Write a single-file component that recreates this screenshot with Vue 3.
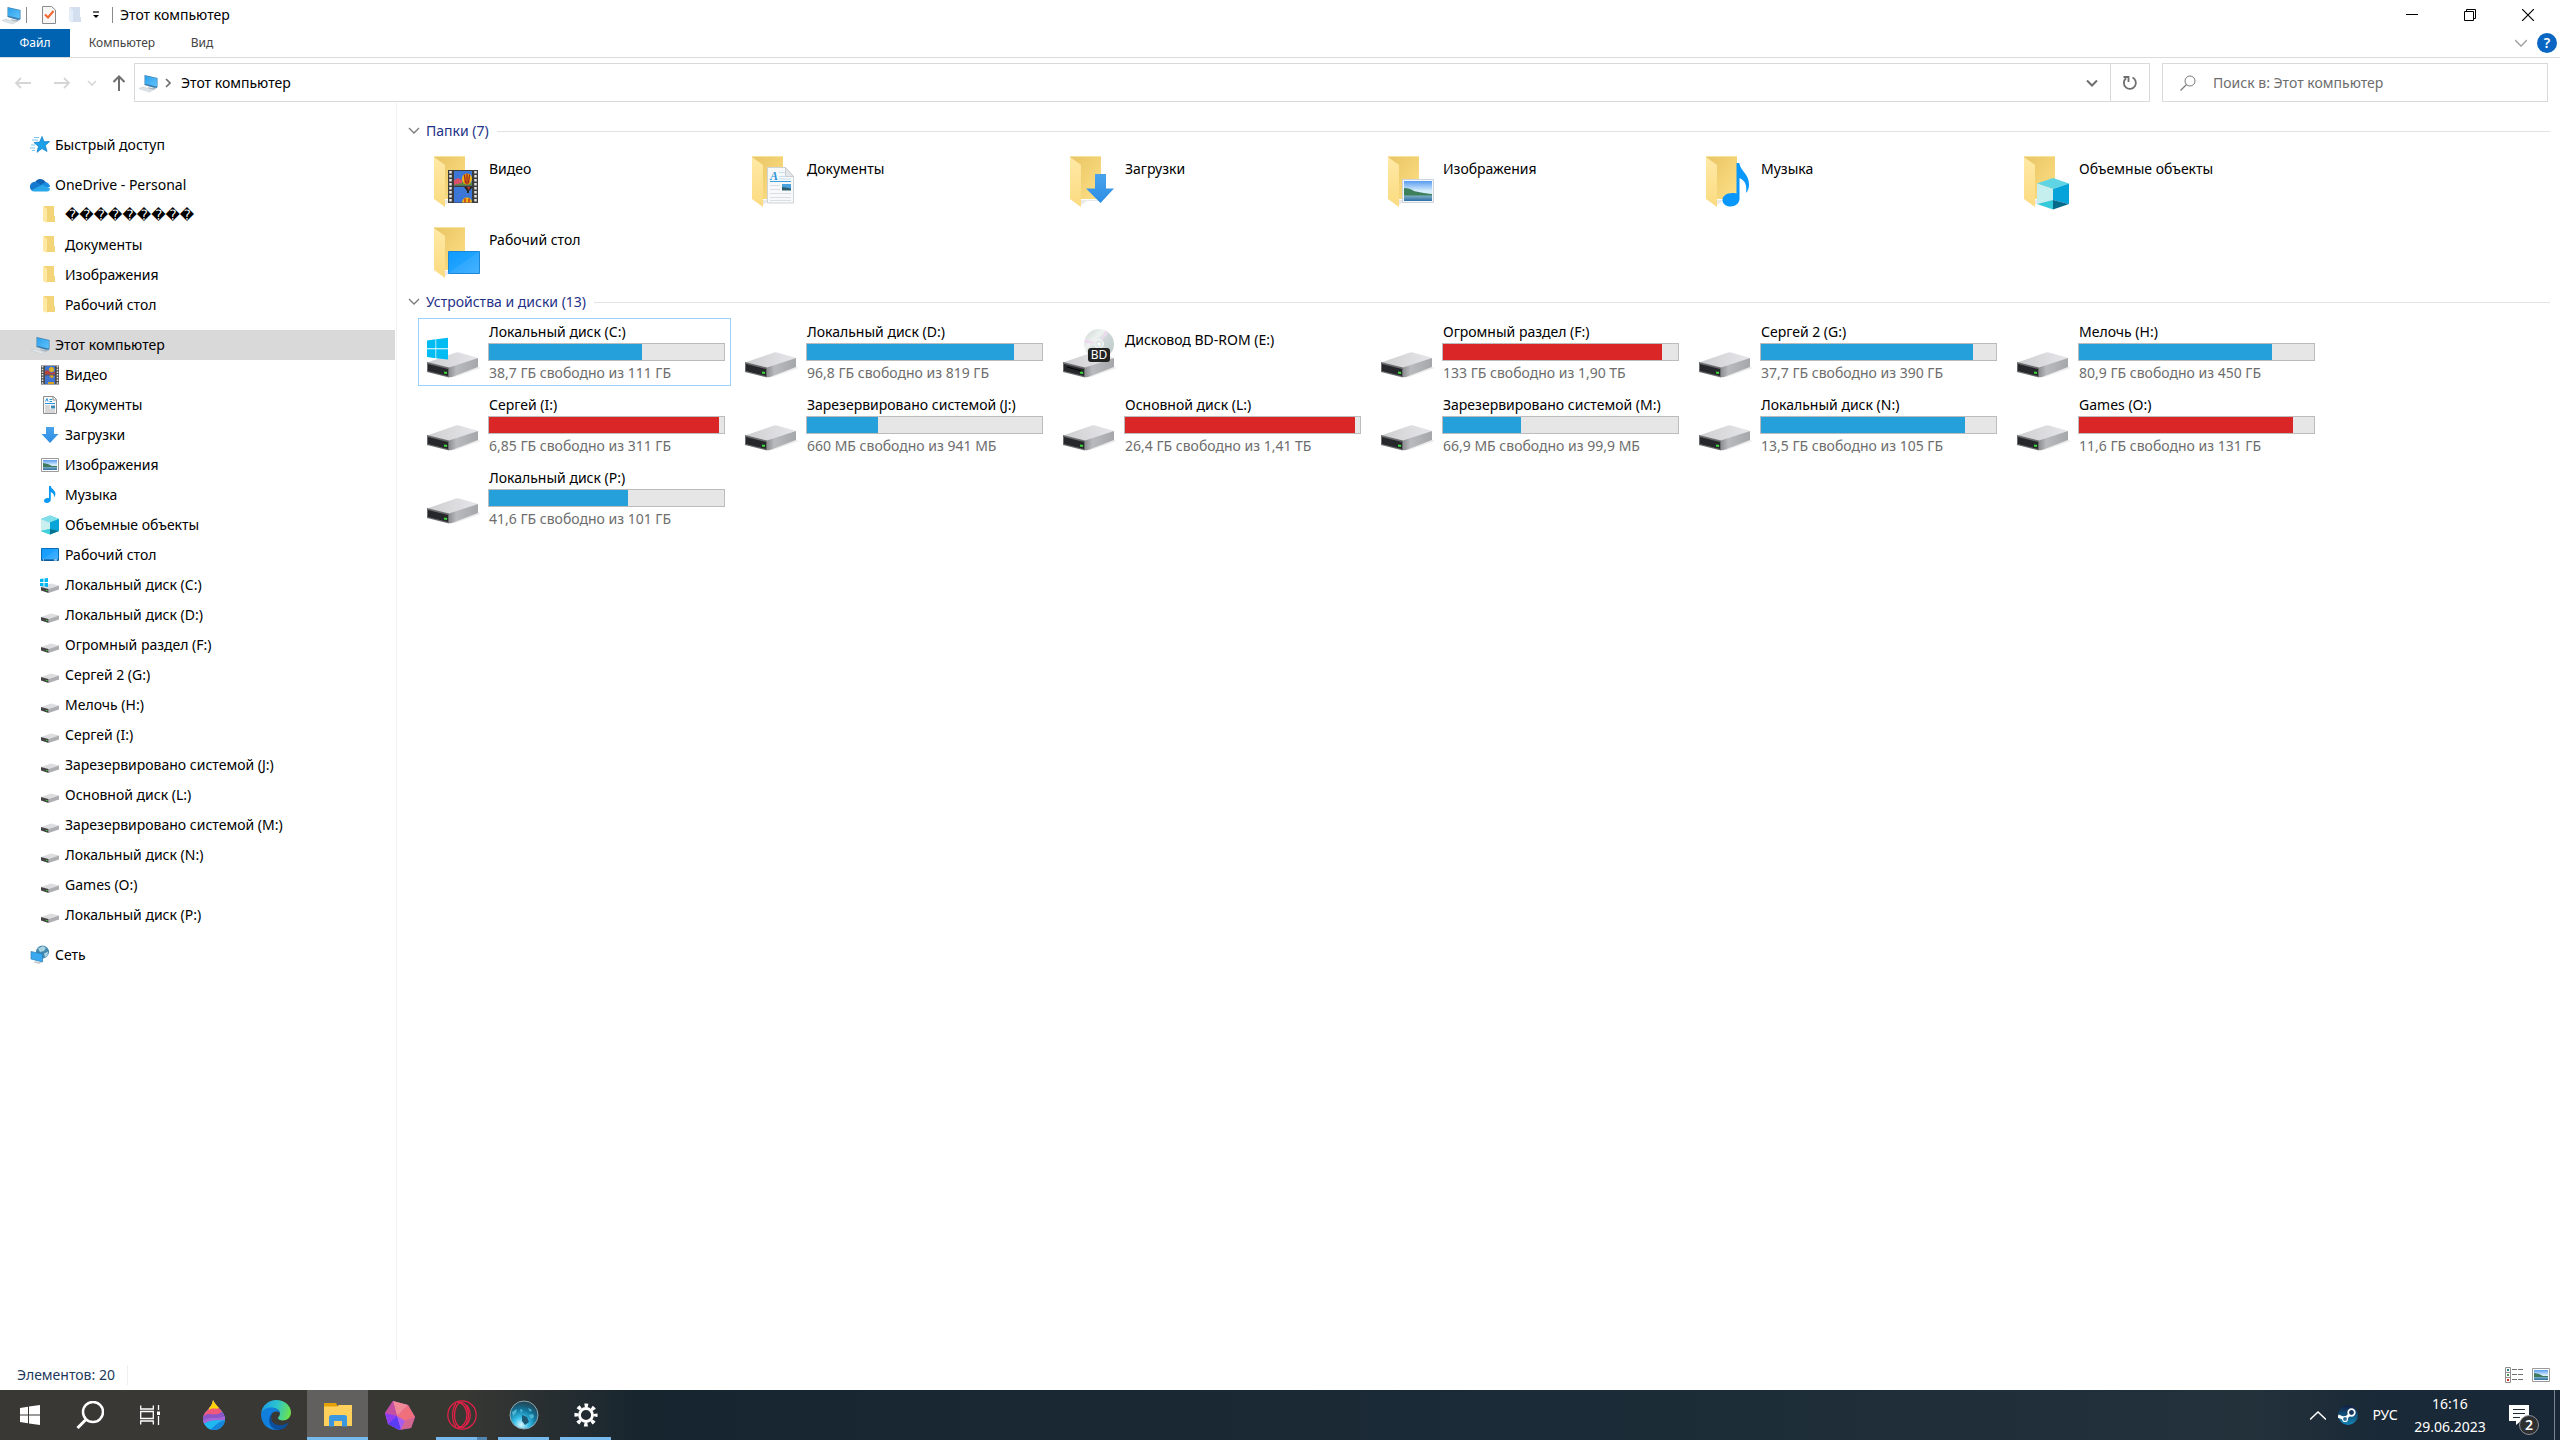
<template>
  <div class="desktop">
    <!-- общий набор иконок -->
    <svg class="sprite" aria-hidden="true">
      <defs>
        <linearGradient id="gBack" x1="0" y1="0" x2="1" y2="1">
          <stop offset="0" stop-color="#e8c566" />
          <stop offset="0.5" stop-color="#f3d274" />
          <stop offset="1" stop-color="#ffe08a" />
        </linearGradient>
        <linearGradient id="gFlap" x1="0" y1="0" x2="0" y2="1">
          <stop offset="0" stop-color="#ffe9a6" />
          <stop offset="1" stop-color="#fbdb80" />
        </linearGradient>
        <linearGradient id="gTop" x1="0" y1="0" x2="1" y2="0">
          <stop offset="0" stop-color="#cfcfd1" />
          <stop offset="1" stop-color="#e6e6ea" />
        </linearGradient>
        <linearGradient id="gSide" x1="0" y1="0" x2="1" y2="0">
          <stop offset="0" stop-color="#8e8f92" />
          <stop offset="0.25" stop-color="#b9babd" />
          <stop offset="1" stop-color="#a6a7aa" />
        </linearGradient>
        <linearGradient id="gSky" x1="0" y1="0" x2="0" y2="1">
          <stop offset="0" stop-color="#5a9bf0" />
          <stop offset="0.5" stop-color="#d6eefc" />
          <stop offset="1" stop-color="#d6eefc" />
        </linearGradient>
        <linearGradient id="gSea" x1="0" y1="0" x2="0" y2="1">
          <stop offset="0" stop-color="#7fb0c4" />
          <stop offset="1" stop-color="#2d6ea8" />
        </linearGradient>
        <linearGradient id="gDesk" x1="0" y1="0" x2="1" y2="1">
          <stop offset="0" stop-color="#0f9bff" />
          <stop offset="0.48" stop-color="#1ea2ff" />
          <stop offset="0.5" stop-color="#2fa8ff" />
          <stop offset="1" stop-color="#45b3ff" />
        </linearGradient>
        <linearGradient id="gArrow" x1="0" y1="0" x2="0" y2="1">
          <stop offset="0" stop-color="#4aa3ec" />
          <stop offset="1" stop-color="#2b8de4" />
        </linearGradient>
        <linearGradient id="gScreen" x1="0" y1="0" x2="1" y2="1">
          <stop offset="0" stop-color="#2f9fe8" />
          <stop offset="1" stop-color="#5cc4ff" />
        </linearGradient>
        <linearGradient id="gDisc" x1="0" y1="0" x2="1" y2="1">
          <stop offset="0" stop-color="#c9d3d0" />
          <stop offset="0.35" stop-color="#eef3f1" />
          <stop offset="0.5" stop-color="#cfd8da" />
          <stop offset="1" stop-color="#b9c6c4" />
        </linearGradient>
      </defs>

      <symbol id="pc" viewBox="0 0 20 20">
        <path d="M6.500 2L19.500 5v9L18 15.500 6.500 12z" fill="#3a7fb0" />
        <path d="M7 2.800L18.800 5.500v8L7 10.800z" fill="url(#gScreen)" />
        <path d="M10 14l4 1 4-.5-1.500 2.500-5.500-1z" fill="#aeb9c2" />
        <path d="M1 15.500l4-1.500 10 3-3.500 2z" fill="#dfe4e8" stroke="#c3cbd1" stroke-width=".6" />
      </symbol>

      <symbol id="star" viewBox="0 0 20 20">
        <path d="M12 1.500l2 5.200 5.500-.2-4.200 4 1.700 6-5-3-5 3.800 1.500-5.800L4 7.500l5.700-.4z" fill="#1fa0ea" stroke="#1583c9" stroke-width=".8" />
        <path d="M4 2.500h5M2 5h6M1 10h4M0 13h5M2 15.500h3" stroke="#6cc0ef" stroke-width=".9" />
      </symbol>

      <symbol id="cloud" viewBox="0 0 20 20">
        <path d="M5 7.500a6 6 0 0 1 10.500-.8L18 10l-7 2z" fill="#0f64b5" />
        <path d="M0 13a5 5 0 0 1 6-6c2 .2 4 2.200 6 3.500L3 16A4 4 0 0 1 0 13z" fill="#1579cf" />
        <path d="M14.500 7.500A4.500 4.500 0 0 1 20 12l-6 1-3-3z" fill="#1a8be0" />
        <path d="M1.500 15.200L12 9.800l7.800 3.500A3 3 0 0 1 17 16.500H4a4 4 0 0 1-2.500-1.300z" fill="#2aa7ea" />
      </symbol>

      <symbol id="folder" viewBox="0 0 20 20">
        <path d="M4 1h10v10h1v6H5z" fill="#f4d478" />
        <path d="M3 1l4 3v14l-4-2z" fill="#ffe8a4" />
      </symbol>

      <symbol id="video" viewBox="0 0 20 20">
        <path d="M1 .5h18v19H1z" fill="#4a4a4a" />
        <path d="M5 1h10v8.500H5z" fill="#3f74d0" />
        <path d="M5 10.500h10V19H5z" fill="#3f74d0" />
        <path d="M2.500 1v18M17.500 1v18" stroke="#e8e8e8" stroke-width="1.600" stroke-dasharray="1.500 1.200" />
        <circle cx="11.500" cy="4.500" r="2.500" fill="#e0b322" />
        <path d="M5 6l3-1 3 3 4-1v2.500H5z" fill="#b8423c" />
        <path d="M9 11l3-1 2 1.500-2 2zM8 17h6v2H8z" fill="#d8a21d" />
      </symbol>

      <symbol id="doc" viewBox="0 0 20 20">
        <path d="M3.500 1.500h10l3 3v14h-13z" fill="#fafafa" stroke="#8e8e8e" />
        <path d="M13 1.500v3.500h3.500" fill="none" stroke="#8e8e8e" />
        <path d="M5.500 6.500l1.500-3 1 3M9.500 4.500H12M9.500 6.500H12M5 8.500h10" fill="none" stroke="#2a93d8" />
        <path d="M5 11h5M5 13h5M5 15h10M5 17h10" stroke="#b4b4b4" />
        <path d="M11 10.500h4v3h-4z" fill="#3d8ab8" />
      </symbol>

      <symbol id="down" viewBox="0 0 20 20">
        <path d="M6 2h8v7h4.500L10 18 1.500 9H6z" fill="url(#gArrow)" />
      </symbol>

      <symbol id="pic" viewBox="0 0 20 20">
        <path d="M1.500 3.500h17v13h-17z" fill="#fff" stroke="#9a9a9a" />
        <path d="M3 5h14v10H3z" fill="url(#gSky)" />
        <path d="M3 8l5 1 4 2 5 0v2H3z" fill="#3f7a5c" />
        <path d="M3 12h14v3H3z" fill="url(#gSea)" />
      </symbol>

      <symbol id="music" viewBox="0 0 20 20">
        <path d="M9 1h1.800c.3 3 4.600 4 4.600 7.500 0 1.800-.6 3-1.200 4 .2-2.500-.8-4.500-3.400-5.500V14.500c0 2-2 3.500-4 3.500S4 17 4 15.500 6 12.500 9 13z" fill="#0a99f5" />
      </symbol>

      <symbol id="cube" viewBox="0 0 20 20">
        <path d="M1 4l9-3.500L19 4v12l-9 3.500L1 16z" fill="#29b9d6" />
        <path d="M1 4l9-3.500L19 4l-9 3.500z" fill="#7fe0ea" />
        <path d="M1 4l9 3.500V14l-9 2z" fill="#c9f0ee" />
        <path d="M10 7.500L19 4v12l-9-2z" fill="#08a5d8" />
        <path d="M1 16l9-2v5.500z" fill="#3fd0dc" />
        <path d="M10 14l9 2-9 3.500z" fill="#04738f" />
      </symbol>

      <symbol id="desk" viewBox="0 0 20 20">
        <path d="M1.500 3.500h17v12h-17z" fill="url(#gDesk)" stroke="#0c6cb5" />
        <path d="M2 15h16" stroke="#06487e" />
        <path d="M3 15h1M14 15h3" stroke="#fff" />
      </symbol>

      <symbol id="drive" viewBox="0 0 20 20">
        <path d="M1 12l10-3.500 8 2L8.500 14z" fill="#dddde0" />
        <path d="M8.500 14L19 10.500V14.500L8.500 18z" fill="#adaeb1" />
        <path d="M1 12l7.500 2v4L1 15.500z" fill="#444" />
        <path d="M6 15.500h1.500" stroke="#35d035" />
      </symbol>

      <symbol id="drivewin" viewBox="0 0 20 20">
        <use href="#drive" />
        <path d="M0 4l3.500-.4V7H0zM4.500 3.400L8 3v4H4.500zM0 8h3.500v3.400L0 11zM4.500 8H8v4l-3.500-.4z" fill="#00b7f1" />
      </symbol>

      <symbol id="net" viewBox="0 0 20 20">
        <circle cx="12.500" cy="7" r="6.500" fill="#4287ad" />
        <path d="M8 3.500l5-2.500 3 2-2 3-4 1zM14 8.500l4-2-.5 4-2.500 2z" fill="#a9d3e0" />
        <path d="M1 6.500l11.500 2.500v8L1 14z" fill="#38a9f0" stroke="#2b7fb8" stroke-width=".7" />
        <path d="M5 16l7 1.500-3 1.500-5-1.500z" fill="#c5ccd2" />
      </symbol>

      <!-- крупные иконки папок -->
      <symbol id="bigFolder" viewBox="0 0 64 66">
        <path d="M26 57l6-4h14v-1H26z" fill="#e9e9e9" />
        <path d="M15 8h31v43H15z" fill="url(#gBack)" />
        <path d="M15 9l11 8v42l-11-8z" fill="url(#gFlap)" />
        <path d="M15 8.500h31" stroke="#f7e2a0" />
      </symbol>
      <symbol id="big-video" viewBox="0 0 64 66">
        <use href="#bigFolder" />
        <path d="M29 22h30v33H29z" fill="#3c3c3c" />
        <path d="M35 23h18v14.500H35zM35 39h18v15.500H35z" fill="#3c76d6" />
        <path d="M31.500 23v32M56.500 23v32" stroke="#e4e4e4" stroke-width="2.500" stroke-dasharray="2.500 1.500" />
        <path d="M35 33c3-3 6-2 8 0l10 2v2.500H35z" fill="#5c8a3f" />
        <path d="M35 32l4-2 4 2v3l-8 2z" fill="#d8506a" />
        <ellipse cx="48" cy="31" rx="5" ry="5.500" fill="#f2b60f" />
        <path d="M48 25.500v11M45.500 26.500l1 9M50.500 26.500l-1 9" stroke="#a3231c" stroke-width="1.400" />
        <path d="M45 39h9l-4 4v2h-2v-2z" fill="#28251f" />
        <path d="M48 39h3l-1 3z" fill="#d43a2a" />
        <path d="M43 54.500a5 5 0 0 1 10 0z" fill="#f2b60f" />
        <path d="M46 50.500v4M50 50.500v4" stroke="#c8321f" stroke-width="1.500" />
      </symbol>
      <symbol id="big-doc" viewBox="0 0 64 66">
        <use href="#bigFolder" />
        <path d="M30.500 19.500h18l8 9v26.500h-26z" fill="#f6f8fa" stroke="#cfd3d7" />
        <path d="M48.500 19.500v9h8z" fill="#e3e7ea" stroke="#c2c6ca" stroke-width=".8" />
        <path d="M42 24.500h6M42 28.500h6M42 31h12" stroke="#c7dff0" />
        <path d="M33 33.500h21" stroke="#3a9fdc" />
        <path d="M33 37.500h10M33 41.500h10M33 45.500h21M33 49.500h21M33 52.500h21" stroke="#dcdfe2" />
        <path d="M45 36h9v6h-9z" fill="#4ba3de" />
        <path d="M45 39l4 .5 5 1v2h-9z" fill="#2d6070" />
      </symbol>
      <symbol id="big-down" viewBox="0 0 64 66">
        <use href="#bigFolder" />
        <path d="M40 26h11v14.500h8L45.500 55 31 40.500h9z" fill="url(#gArrow)" />
      </symbol>
      <symbol id="big-pic" viewBox="0 0 64 66">
        <use href="#bigFolder" />
        <path d="M29.500 31.500h31v23h-31z" fill="#f4f7fa" stroke="#ccd3da" />
        <path d="M31 33h28v20H31z" fill="url(#gSky)" />
        <path d="M31 40c4 0 7 1 10 3 5 1 9 2 18 3v2H31z" fill="#3e7f5c" />
        <path d="M31 47.500h28V53H31z" fill="url(#gSea)" />
      </symbol>
      <symbol id="big-music" viewBox="0 0 64 66">
        <use href="#bigFolder" />
        <path d="M45.500 15h2.800c1 8 9.700 11 9.700 21 0 4-1 7-3 9 1-7 0-12-6.500-15v21c0 4-4 7.500-9 7.500-4.500 0-8-2.500-8-6.500 0-5 6-8 14-6.500z" fill="#0a97fb" />
      </symbol>
      <symbol id="big-cube" viewBox="0 0 64 66">
        <use href="#bigFolder" />
        <path d="M28 35.500L44 30l16 5.500-16 5.500z" fill="#5fd4e4" />
        <path d="M28 35.500L44 41v11l-16 4z" fill="#c4efee" />
        <path d="M44 41l16-5.500V56l-16-4z" fill="#06a3da" />
        <path d="M28 56l16-4v9.500z" fill="#35c9d9" />
        <path d="M44 52l16 4-16 5.500z" fill="#046a8c" />
      </symbol>
      <symbol id="big-desk" viewBox="0 0 64 66">
        <use href="#bigFolder" />
        <path d="M29.500 32.500h31v22h-31z" fill="url(#gDesk)" stroke="#1c86d6" />
      </symbol>

      <!-- крупные иконки дисков -->
      <symbol id="big-drive" viewBox="0 0 64 66">
        <path d="M31 58l28-10 3 1-26 9z" fill="#ececec" />
        <path d="M8 43.500L37 33.500q1.500-.5 3 0L58 38.500q1 .5 0 1L31 49z" fill="url(#gTop)" />
        <path d="M30 48.500L59 39v9L33 58q-1.500.5-3 0z" fill="url(#gSide)" />
        <path d="M8 43l22 5.500V58.500L8 53z" fill="#6b6c6e" />
        <path d="M9 45l20 5v7L9 52z" fill="#26272a" />
        <path d="M25 53.500l3 .5" stroke="#3ddc3d" stroke-width="2" />
      </symbol>
      <symbol id="big-win" viewBox="0 0 64 66">
        <use href="#big-drive" />
        <path d="M8 21.500l8.500-1.200v9H8zM17.200 20.200L29 18.800v10.500H17.200zM8 30.200h8.500v9L8 38zM17.200 30.200H29V40.500l-11.800-1.300z" fill="#00bcf2" />
      </symbol>
      <symbol id="big-bd" viewBox="0 0 64 66">
        <use href="#big-drive" />
        <path d="M12 48l14 4" stroke="#000" />
        <circle cx="44" cy="25" r="15" fill="url(#gDisc)" />
        <path d="M44 25L30 20l0 4zM44 25l6-13 3 2z" fill="#eed9ee" />
        <circle cx="44" cy="25" r="4.500" fill="#dfe7e6" stroke="#f7fafa" />
        <circle cx="44" cy="25" r="1.500" fill="#fff" />
      </symbol>
    </svg>

    <header class="titlebar">
      <svg class="ico title-pc"><use href="#pc" /></svg>
      <span class="v-sep"></span>
      <button class="quick" aria-label="Свойства">
        <svg width="16" height="18" viewBox="0 0 16 18">
          <path d="M1.500.5h9l4 3.500v13.500h-13z" fill="#f7f7f7" stroke="#8a8a8a" />
          <path d="M4 8.500l3 3 5.500-6.500" fill="none" stroke="#f0642d" stroke-width="2" />
        </svg>
      </button>
      <button class="quick" aria-label="Новая папка">
        <svg width="14" height="18" viewBox="0 0 14 18">
          <path d="M2 1h10v10h1v5H3z" fill="#d3deee" />
          <path d="M1 1l4 3v13l-4-2z" fill="#e4ecf7" />
        </svg>
      </button>
      <button class="quick drop" aria-label="Настройка панели">
        <svg width="8" height="8" viewBox="0 0 8 8">
          <path d="M1 1h6" stroke="#000" stroke-width="1.200" />
          <path d="M1 4h6L4 7z" />
        </svg>
      </button>
      <span class="v-sep"></span>
      <h1 class="title">Этот компьютер</h1>
      <div class="win-buttons">
        <button aria-label="Свернуть">
          <svg width="12" height="12" viewBox="0 0 12 12"><path d="M0 5.500h12" stroke="#000" /></svg>
        </button>
        <button aria-label="Развернуть">
          <svg width="12" height="12" viewBox="0 0 12 12"><path d="M.5 2.500h9v9h-9zM2.500 2.500v-2h9v9h-2" fill="none" stroke="#000" /></svg>
        </button>
        <button aria-label="Закрыть">
          <svg width="12" height="12" viewBox="0 0 12 12"><path d="M0 0l12 12M12 0L0 12" stroke="#000" stroke-width="1.200" /></svg>
        </button>
      </div>
    </header>

    <nav class="ribbon">
      <button class="tab file">Файл</button>
      <button class="tab">Компьютер</button>
      <button class="tab view">Вид</button>
      <button class="ribbon-toggle" aria-label="Развернуть ленту">
        <svg width="12" height="8" viewBox="0 0 12 8"><path d="M0 1l6 6 6-6" fill="none" stroke="#a0a0a0" stroke-width="1.400" /></svg>
      </button>
      <button class="help" aria-label="Справка">?</button>
    </nav>

    <div class="address-row">
      <button class="nav-btn" aria-label="Назад">
        <svg width="16" height="12" viewBox="0 0 16 12"><path d="M16 6H1M6 1L1 6l5 5" fill="none" stroke="#d6d6d6" stroke-width="1.800" /></svg>
      </button>
      <button class="nav-btn" aria-label="Вперед">
        <svg width="16" height="12" viewBox="0 0 16 12"><path d="M0 6h15M10 1l5 5-5 5" fill="none" stroke="#d6d6d6" stroke-width="1.800" /></svg>
      </button>
      <button class="nav-btn small" aria-label="Последние расположения">
        <svg width="10" height="6" viewBox="0 0 10 6"><path d="M1 1l4 4 4-4" fill="none" stroke="#d6d6d6" stroke-width="1.600" /></svg>
      </button>
      <button class="nav-btn up" aria-label="Вверх">
        <svg width="14" height="16" viewBox="0 0 14 16"><path d="M7 16V1.500M1.500 7L7 1.500 12.500 7" fill="none" stroke="#6e6e6e" stroke-width="2" /></svg>
      </button>
      <div class="address">
        <svg class="ico"><use href="#pc" /></svg>
        <svg class="crumb-arrow" width="6" height="10" viewBox="0 0 6 10"><path d="M1 1l4 4-4 4" fill="none" stroke="#6e6e6e" stroke-width="1.600" /></svg>
        <a href="#" class="crumb">Этот компьютер</a>
        <button class="addr-drop" aria-label="Журнал">
          <svg width="12" height="8" viewBox="0 0 12 8"><path d="M1 1.500l5 5 5-5" fill="none" stroke="#6e6e6e" stroke-width="2" /></svg>
        </button>
        <button class="refresh" aria-label="Обновить">
          <svg width="16" height="16" viewBox="0 0 16 16">
            <path d="M10.500 2.500A6 6 0 1 1 4 3.300" fill="none" stroke="#6e6e6e" stroke-width="1.800" />
            <path d="M1.500 2h5v5" fill="none" stroke="#6e6e6e" stroke-width="1.800" />
          </svg>
        </button>
      </div>
      <label class="search">
        <svg width="16" height="16" viewBox="0 0 16 16">
          <circle cx="10" cy="6" r="5" fill="none" stroke="#7a7a7a" />
          <path d="M6.500 9.500L.5 15.500" stroke="#7a7a7a" stroke-width="1.200" />
        </svg>
        <input type="text" placeholder="Поиск в: Этот компьютер" aria-label="Поиск">
      </label>
    </div>

    <div class="body">
      <aside class="sidebar">
        <ul v-for="(group, i) in tree" :key="i" class="tree-group">
          <li
            v-for="item in group"
            :key="item.name + item.icon"
            class="tree-item"
            :class="{ child: item.child, selected: item.selected }"
          >
            <svg class="ico"><use :href="'#' + item.icon" /></svg>
            <span :class="{ broken: item.broken }">{{ item.name }}</span>
          </li>
        </ul>
      </aside>

      <main class="content">
        <h2 class="group-title">
          <svg width="12" height="8" viewBox="0 0 12 8"><path d="M1 1l5 5 5-5" fill="none" stroke="#7a7a7a" stroke-width="1.300" /></svg>
          Папки (7)
        </h2>
        <div class="tiles folders">
          <div v-for="f in folders" :key="f.name" class="tile">
            <div class="tile-pic">
              <svg class="tile-icon"><use :href="'#big-' + f.icon" /></svg>
              <span v-if="f.icon === 'doc'" class="doc-letter">A</span>
            </div>
            <div class="tile-name single">{{ f.name }}</div>
          </div>
        </div>

        <h2 class="group-title">
          <svg width="12" height="8" viewBox="0 0 12 8"><path d="M1 1l5 5 5-5" fill="none" stroke="#7a7a7a" stroke-width="1.300" /></svg>
          Устройства и диски (13)
        </h2>
        <div class="tiles drives">
          <div v-for="d in drives" :key="d.name" class="tile" :class="{ focused: d.icon === 'win' }">
            <div class="tile-pic">
              <svg class="tile-icon"><use :href="'#big-' + (d.icon || 'drive')" /></svg>
              <span v-if="d.icon === 'bd'" class="bd-label">BD</span>
            </div>
            <div v-if="d.free" class="tile-info">
              <div class="tile-name">{{ d.name }}</div>
              <div class="bar" role="progressbar" :aria-valuenow="d.used">
                <div class="bar-fill" :class="{ full: d.used > 90 }" :style="{ width: d.used + '%' }"></div>
              </div>
              <div class="tile-free">{{ d.free }}</div>
            </div>
            <div v-else class="tile-name single">{{ d.name }}</div>
          </div>
        </div>
      </main>
    </div>

    <div class="statusbar">
      <span class="count">Элементов: 20</span>
      <button class="view-btn" aria-label="Таблица">
        <svg width="18" height="16" viewBox="0 0 18 16">
          <path d="M.5.500h5v15h-5zM.5 5.500h5M.5 10.500h5" fill="#fff" stroke="#8f8f8f" />
          <path d="M2 3h2" stroke="#2e7d8c" stroke-width="2" />
          <path d="M2 8h2" stroke="#4f8f5a" stroke-width="2" />
          <path d="M2 13h2" stroke="#c8321f" stroke-width="2" />
          <path d="M7 2.500h5M13 2.500h5M7 7.500h5M13 7.500h5M7 12.500h5M13 12.500h5" stroke="#6f6f6f" />
        </svg>
      </button>
      <button class="view-btn" aria-label="Эскизы">
        <svg class="ico"><use href="#pic" /></svg>
      </button>
    </div>

    <footer class="taskbar">
      <button class="task sys" aria-label="Пуск">
        <svg width="20" height="20" viewBox="0 0 20 20">
          <path d="M0 3l8-1.200v7.700H0zM9 1.600L20 0v9.500H9zM0 10.500h8v7.700L0 17zM9 10.500h11V20L9 18.400z" fill="#fff" />
        </svg>
      </button>
      <button class="task sys" aria-label="Поиск">
        <svg width="28" height="28" viewBox="0 0 28 28">
          <circle cx="17" cy="11" r="10" fill="none" stroke="#fff" stroke-width="2.500" />
          <path d="M10 18.500L1.500 27" stroke="#fff" stroke-width="3" />
        </svg>
      </button>
      <button class="task sys" aria-label="Представление задач">
        <svg width="20" height="20" viewBox="0 0 20 20">
          <path d="M.7.500v3.500h12.600V.5M.7 19.500V16h12.600v3.500M.7 6.500h12.600v7H.7zM18.500 0v5M18.500 11v9" fill="none" stroke="#fff" stroke-width="1.300" />
          <path d="M17 6.500h3v3.500h-3z" fill="#fff" />
        </svg>
      </button>
      <div class="apps">
        <button class="task" aria-label="Paint 3D">
          <svg width="24" height="30" viewBox="0 0 24 30">
            <defs>
              <clipPath id="drop"><path d="M11 0c3 7 12 11 12 19a11 11 0 0 1-22 0C1 11 10 9 11 0z" /></clipPath>
            </defs>
            <g clip-path="url(#drop)">
              <path d="M0 0h24v30H0z" fill="#1fb8f0" />
              <path d="M0 12h24v4C17 22 9 15 0 24z" fill="#8a56c8" />
              <path d="M0 18c6-8 12-1 18-5s6-4 6-4V0H0z" fill="#f0587c" />
              <path d="M7 0h10v8c-3 2-6-1-10 2z" fill="#ffd400" />
              <path d="M24 15v5C17 21 9 18 0 25v-4c9-6 16 0 24-6z" fill="#a765d6" />
              <path d="M24 20v10H6c6-1 8-9 18-10z" fill="#1686dc" />
            </g>
          </svg>
        </button>
        <button class="task" aria-label="Microsoft Edge">
          <svg width="30" height="30" viewBox="0 0 30 30">
            <defs>
              <linearGradient id="edgeA" x1="0" y1="0.3" x2="1" y2="0.5">
                <stop offset="0" stop-color="#1b9de2" />
                <stop offset="0.5" stop-color="#2cc4d0" />
                <stop offset="1" stop-color="#6be24a" />
              </linearGradient>
            </defs>
            <path d="M0 14C1 5 8 0 15 0c9 0 15 6 15 12.500 0 5-4 8-8 8-3 0-5-1-5-2.500 0-1 2-2 2-5C19 10 15 8 11 8 5 8 1 11 0 14z" fill="url(#edgeA)" />
            <path d="M0 14C1 10 5 7.500 10 7.500c5 0 9 2.500 9 6-2-3-8-2.500-9 2-1.500 6 3 12 9 14-1.500.4-3 .5-4 .5C6 30 0 23 0 14z" fill="#1180dc" />
            <path d="M12 12.500c-3 4-2.500 10 3 12 5 2 10 0 13-2.500C26 27 21 30 17 30 10 29 7 23 8.500 17.500c.5-2 2-4 3.500-5z" fill="#0c4f9c" />
          </svg>
        </button>
        <button class="task active" aria-label="Проводник">
          <svg width="28" height="24" viewBox="0 0 28 24">
            <path d="M0 0h12l2 4H0z" fill="#e3a008" />
            <path d="M0 3.500h13l2-1.500h13v21H0z" fill="#ffd05c" />
            <path d="M5 23.500v-9Q5 12 7.500 12h13q2.500 0 2.500 2.500v9h-5V18h-8v5.500z" fill="#3b97e0" />
          </svg>
        </button>
        <button class="task" aria-label="Кристалл">
          <svg width="30" height="29" viewBox="0 0 30 29">
            <path d="M8 0l15 4 7 12-4 11-12 2L3 23 0 12z" fill="#c65cd8" />
            <path d="M8 0l15 4-11 11z" fill="#f08a94" />
            <path d="M8 0l4 15L0 12z" fill="#c24fa0" />
            <path d="M23 4l7 12-10 4-8-5z" fill="#ef6f7c" />
            <path d="M0 12l12 3-9 8z" fill="#8d3cf0" />
            <path d="M12 15l4 13-2 1-11-6z" fill="#5b3cf5" />
            <path d="M12 15l8 5-4 9z" fill="#a95cf0" />
            <path d="M30 16l-4 11-10 1.500 4-8.500z" fill="#d4678f" />
          </svg>
        </button>
        <button class="task running two" aria-label="Opera GX">
          <svg width="30" height="30" viewBox="0 0 30 30" fill="none" stroke="#ea1f48" stroke-width="1.200">
            <circle cx="15" cy="15" r="14.200" />
            <path d="M9 3.500C4.500 9 4.500 21 9 26.500M10.500 2.500C15 2 20 8 20 15s-5 13-9.500 12.500" />
            <ellipse cx="14.500" cy="15" rx="7" ry="12.500" />
            <path d="M19.500 5c5 6 5 14 0 20" />
          </svg>
        </button>
        <button class="task running" aria-label="Планета">
          <svg width="30" height="30" viewBox="0 0 30 30">
            <defs>
              <radialGradient id="orb" cx="0.4" cy="0.85" r="0.9">
                <stop offset="0" stop-color="#d9f7ff" />
                <stop offset="0.3" stop-color="#35bfe8" />
                <stop offset="0.6" stop-color="#12759c" />
                <stop offset="1" stop-color="#26383f" />
              </radialGradient>
            </defs>
            <circle cx="15" cy="15" r="14" fill="url(#orb)" stroke="#8fa6ae" />
            <path d="M3 12l5-3-1 4-3 3zM11 9l3 1-2 3zM19 8l4 2-2 2zM20 15l4-1 1 3-3 2z" fill="#4fb7d2" />
            <path d="M13 15l5 2 2 5-4 3-3-4z" fill="#1d5873" />
          </svg>
        </button>
        <button class="task running" aria-label="Параметры">
          <svg width="24" height="24" viewBox="0 0 24 24" fill="none" stroke="#fff">
            <circle cx="12" cy="12" r="6.500" stroke-width="2.800" />
            <circle cx="12" cy="12" r="9.600" stroke-width="4" stroke-dasharray="3.540 4" stroke-dashoffset="1.770" />
          </svg>
        </button>
      </div>

      <div class="tray">
        <button class="tray-btn" aria-label="Скрытые значки">
          <svg width="16" height="9" viewBox="0 0 16 9"><path d="M0 8.500l8-7.500 8 7.500" fill="none" stroke="#fff" stroke-width="1.500" /></svg>
        </button>
        <button class="tray-btn steam" aria-label="Steam">
          <svg width="20" height="20" viewBox="0 0 20 20">
            <defs>
              <linearGradient id="steamBg" x1="0" y1="0" x2="0" y2="1">
                <stop offset="0" stop-color="#111d40" />
                <stop offset="1" stop-color="#1387b8" />
              </linearGradient>
            </defs>
            <circle cx="10" cy="10" r="10" fill="url(#steamBg)" />
            <path d="M0 11l7 3 5-5" fill="none" stroke="#fff" stroke-width="3" />
            <circle cx="13.500" cy="7.500" r="3.300" fill="#16345c" stroke="#fff" stroke-width="1.700" />
            <circle cx="7" cy="14" r="2.500" fill="#2a6f9c" stroke="#fff" stroke-width="1.200" />
          </svg>
        </button>
        <button class="lang">РУС</button>
        <button class="clock">
          <span>16:16</span>
          <span>29.06.2023</span>
        </button>
        <button class="notify" aria-label="Уведомления">
          <svg width="20" height="20" viewBox="0 0 20 20">
            <path d="M0 0h20v16h-8l-5 4v-4H0z" fill="#fff" />
            <path d="M4 4.500h12M4 8.500h12M4 12.500h7" stroke="#1c2b38" stroke-width="1.200" />
          </svg>
          <span class="badge">2</span>
        </button>
        <button class="show-desktop" aria-label="Свернуть все окна"></button>
      </div>
    </footer>
  </div>
</template>

<script setup>
const folders = [
  { name: 'Видео', icon: 'video' },
  { name: 'Документы', icon: 'doc' },
  { name: 'Загрузки', icon: 'down' },
  { name: 'Изображения', icon: 'pic' },
  { name: 'Музыка', icon: 'music' },
  { name: 'Объемные объекты', icon: 'cube' },
  { name: 'Рабочий стол', icon: 'desk' }
]

const drives = [
  { name: 'Локальный диск (C:)', used: 65, free: '38,7 ГБ свободно из 111 ГБ', icon: 'win' },
  { name: 'Локальный диск (D:)', used: 88, free: '96,8 ГБ свободно из 819 ГБ' },
  { name: 'Дисковод BD-ROM (E:)', icon: 'bd' },
  { name: 'Огромный раздел (F:)', used: 93, free: '133 ГБ свободно из 1,90 ТБ' },
  { name: 'Сергей 2 (G:)', used: 90, free: '37,7 ГБ свободно из 390 ГБ' },
  { name: 'Мелочь (H:)', used: 82, free: '80,9 ГБ свободно из 450 ГБ' },
  { name: 'Сергей (I:)', used: 98, free: '6,85 ГБ свободно из 311 ГБ' },
  { name: 'Зарезервировано системой (J:)', used: 30, free: '660 МБ свободно из 941 МБ' },
  { name: 'Основной диск (L:)', used: 98, free: '26,4 ГБ свободно из 1,41 ТБ' },
  { name: 'Зарезервировано системой (M:)', used: 33, free: '66,9 МБ свободно из 99,9 МБ' },
  { name: 'Локальный диск (N:)', used: 87, free: '13,5 ГБ свободно из 105 ГБ' },
  { name: 'Games (O:)', used: 91, free: '11,6 ГБ свободно из 131 ГБ' },
  { name: 'Локальный диск (P:)', used: 59, free: '41,6 ГБ свободно из 101 ГБ' }
]

// в дереве дисковод не показывается
const driveNodes = drives
  .filter(d => d.free)
  .map(d => ({ name: d.name, icon: d.icon ? 'drivewin' : 'drive', child: true }))

const tree = [
  [{ name: 'Быстрый доступ', icon: 'star' }],
  [
    { name: 'OneDrive - Personal', icon: 'cloud' },
    { name: '\uFFFD'.repeat(9), icon: 'folder', child: true, broken: true },
    { name: 'Документы', icon: 'folder', child: true },
    { name: 'Изображения', icon: 'folder', child: true },
    { name: 'Рабочий стол', icon: 'folder', child: true }
  ],
  [
    { name: 'Этот компьютер', icon: 'pc', selected: true },
    ...folders.map(f => ({ ...f, child: true })),
    ...driveNodes
  ],
  [{ name: 'Сеть', icon: 'net' }]
]
</script>

<style>
body {
  background: #fff;
}
</style>

<style scoped>
.desktop {
  min-height: 100vh;
  display: flex;
  flex-direction: column;
  font-family: "Noto Sans", "Open Sans", sans-serif;
  font-size: 14px;
  line-height: 20px;
  color: #000;
}

.sprite {
  position: absolute;
  width: 0;
  height: 0;
}

button {
  display: flex;
  align-items: center;
  justify-content: center;
  padding: 0;
  border: none;
  background: none;
  font: inherit;
  color: inherit;
}

.ico {
  width: 20px;
  height: 20px;
  flex: none;
}

/* Заголовок окна */
.titlebar {
  display: flex;
  align-items: center;
  height: 29px;
}

.title-pc {
  margin: 0 5px 0 1px;
}

.v-sep {
  width: 1px;
  height: 16px;
  background: #8a8a8a;
}

.quick {
  width: 16px;
  margin-left: 10px;
}

.v-sep + .quick {
  margin-left: 14px;
}

.quick.drop {
  width: 8px;
  margin: 0 12px 0 9px;
}

.title {
  margin: 0 0 0 7px;
  font-size: 14px;
  font-weight: 400;
}

.win-buttons {
  display: flex;
  height: 29px;
  margin: 0 3px 0 auto;
}

.win-buttons button {
  width: 58px;
}

/* Лента */
.ribbon {
  display: flex;
  align-items: stretch;
  height: 28px;
  border-bottom: 1px solid #dadbdc;
  font-size: 12px;
  color: #444;
}

.tab {
  width: 104px;
}

.tab.file {
  width: 70px;
  background: #0063b1;
  color: #fff;
}

.tab.view {
  width: 56px;
}

.ribbon-toggle {
  width: 24px;
  margin-left: auto;
}

.help {
  align-self: center;
  width: 20px;
  height: 20px;
  margin: 0 3px 0 4px;
  border-radius: 50%;
  background: #0a66c2;
  color: #fff;
  font-size: 14px;
  font-weight: 600;
}

/* Адресная строка */
.address-row {
  display: flex;
  align-items: center;
  padding: 5px 12px 0 3px;
}

.nav-btn {
  width: 39px;
}

.nav-btn.small {
  width: 22px;
}

.nav-btn.up {
  width: 31px;
}

.address {
  display: flex;
  align-items: center;
  flex: 1;
  height: 37px;
  padding-left: 3px;
  border: 1px solid #d9d9d9;
}

.crumb-arrow {
  margin: 0 10px 0 7px;
}

.crumb {
  flex: 1;
  color: #000;
  text-decoration: none;
}

.addr-drop {
  width: 36px;
}

.refresh {
  width: 39px;
  height: 37px;
  border-left: 1px solid #d9d9d9;
}

.search {
  display: flex;
  align-items: center;
  gap: 17px;
  box-sizing: border-box;
  width: 386px;
  height: 39px;
  margin-left: 12px;
  padding-left: 17px;
  border: 1px solid #d9d9d9;
}

.search input {
  flex: 1;
  min-width: 0;
  padding: 0;
  border: none;
  outline: none;
  background: none;
  font: inherit;
}

.search input::placeholder {
  color: #6d6d6d;
}

/* Основная область */
.body {
  flex: 1;
  display: flex;
}

.sidebar {
  width: 396px;
  padding-top: 28px;
  border-right: 1px solid #f3f3f3;
}

.tree-group {
  list-style: none;
  margin: 0 0 10px;
  padding: 0 1px 0 0;
}

.tree-item {
  display: flex;
  align-items: center;
  gap: 5px;
  height: 30px;
  padding-left: 30px;
}

.tree-item.child {
  padding-left: 40px;
}

.tree-item.selected {
  background: #d9d9d9;
}

.broken {
  font-family: "DejaVu Sans", sans-serif;
}

.content {
  flex: 1;
  padding: 13px 10px 0 11px;
}

.group-title {
  display: flex;
  align-items: center;
  gap: 6px;
  height: 32px;
  margin: 0;
  font-size: 14px;
  font-weight: 400;
  color: #1e3287;
}

.group-title::after {
  content: "";
  flex: 1;
  height: 1px;
  margin-left: 2px;
  background: #e2e2e2;
}

.tiles {
  display: grid;
  grid-template-columns: repeat(auto-fill, 313px);
  column-gap: 5px;
  padding: 0 200px 0 10px;
}

.folders {
  row-gap: 3px;
}

.drives {
  row-gap: 5px;
}

.tile {
  display: flex;
  gap: 5px;
  box-sizing: border-box;
  height: 68px;
  border: 1px solid transparent;
}

.tile.focused {
  border-color: #99d1ff;
}

.tile-pic {
  position: relative;
  flex: none;
}

.tile-icon {
  display: block;
  width: 64px;
  height: 66px;
}

.doc-letter {
  position: absolute;
  left: 33px;
  top: 22px;
  font: italic bold 12px/12px "Liberation Serif", serif;
  color: #2a93d8;
}

.bd-label {
  position: absolute;
  left: 33px;
  top: 29px;
  width: 22px;
  border-radius: 3px;
  background: #222;
  color: #fff;
  font-size: 12px;
  line-height: 14px;
  text-align: center;
}

.tile-info {
  width: 237px;
  padding-top: 3px;
}

.tile-name,
.tile-free {
  padding-left: 1px;
  white-space: nowrap;
}

.tile-name.single {
  padding-top: 11px;
}

.tile-free {
  color: #6d6d6d;
}

.bar {
  height: 16px;
  margin: 1px 0 2px;
  border: 1px solid #bcbcbc;
  background: #e6e6e6;
}

.bar-fill {
  height: 100%;
  background: #26a0da;
}

.bar-fill.full {
  background: #da2626;
}

/* Строка состояния */
.statusbar {
  display: flex;
  align-items: center;
  gap: 8px;
  height: 30px;
  padding-right: 9px;
  color: #1e395b;
}

.count {
  margin-right: auto;
  padding: 0 12px 0 17px;
  border-right: 1px solid #f0f0f0;
}

/* Панель задач */
.taskbar {
  display: flex;
  height: 50px;
  background: linear-gradient(90deg, #3a3835 0%, #383833 18%, #17252f 25%, #1b2b37 60%, #22313a 88%, #1a2937 93%, #192836 100%);
  color: #fff;
}

.task {
  position: relative;
  width: 61px;
}

.task.sys {
  width: 60px;
}

.apps {
  display: flex;
  gap: 1px;
  margin-left: 3px;
}

.task.active {
  background: #61605e;
}

.task.active::after,
.task.running::after {
  content: "";
  position: absolute;
  left: 5px;
  right: 5px;
  bottom: 0;
  height: 3px;
  background: #76b9ed;
}

.task.active::after {
  left: 0;
  right: 0;
}

.task.two::after {
  background: linear-gradient(90deg, #76b9ed 80%, #5185ad 80%);
}

.tray {
  display: flex;
  margin-left: auto;
}

.tray-btn {
  width: 16px;
}

.tray-btn.steam {
  width: 44px;
}

.lang {
  width: 30px;
}

.clock {
  flex-direction: column;
  gap: 3px;
  width: 100px;
}

.notify {
  position: relative;
  width: 54px;
  padding-right: 16px;
}

.badge {
  position: absolute;
  left: 19px;
  bottom: 5px;
  width: 20px;
  height: 20px;
  box-sizing: border-box;
  border: 1px solid #8d9298;
  border-radius: 50%;
  background: #2d2f31;
  font-weight: 600;
  line-height: 18px;
}

.show-desktop {
  width: 6px;
  border-left: 1px solid #7c858d;
}
</style>
